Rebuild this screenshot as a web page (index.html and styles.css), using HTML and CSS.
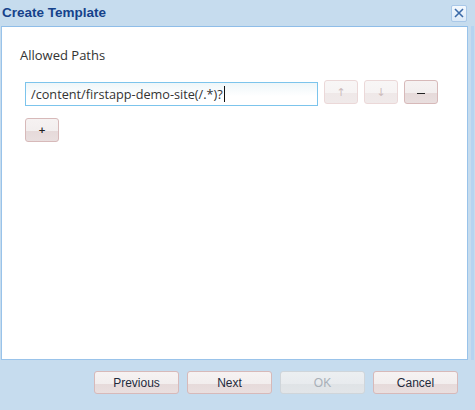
FILE: index.html
```html
<!DOCTYPE html>
<html>
<head>
<meta charset="utf-8">
<link rel="stylesheet" href="styles.css">
</head>
<body>
<div class="window">
  <div class="header">
    <div class="title">Create Template</div>
    <div class="close">
      <svg width="10" height="10" viewBox="0 0 10 10"><path d="M1 1L9 9M9 1L1 9" stroke="#3b6aa8" stroke-width="1.6" fill="none"/></svg>
    </div>
  </div>
  <div class="middle">
    <div class="panel">
      <div class="label">Allowed Paths</div>
      <div class="row">
        <div class="input">/content/firstapp-demo-site(/.*)?<span class="caret"></span></div>
        <div class="btn small disabled"><span class="arrow">&#8593;</span></div>
        <div class="btn small disabled"><span class="arrow">&#8595;</span></div>
        <div class="btn small"><span class="minus"></span></div>
      </div>
      <div class="btn small plus">+</div>
    </div>
    <div class="strip"><div class="stripe"></div></div>
  </div>
  <div class="footer">
    <div class="btn big">Previous</div>
    <div class="btn big">Next</div>
    <div class="btn big disabled">OK</div>
    <div class="btn big">Cancel</div>
  </div>
</div>
</body>
</html>
```
FILE: styles.css
```css
html, body { margin: 0; padding: 0; }
body { width: 475px; height: 410px; overflow: hidden; }
.window {
  width: 475px; height: 410px; background: #c6dcee;
  display: flex; flex-direction: column;
}
.header {
  height: 26px; display: flex; align-items: center; justify-content: space-between;
  padding: 0 8px 0 2px; box-sizing: border-box;
}
.title {
  font-family: "Liberation Sans", Arial, sans-serif; font-weight: bold; font-size: 13.5px;
  color: #15428b; margin-top: -1px;
}
.close {
  width: 14px; height: 15px; border: 1px solid #a9c8e8; border-radius: 2px;
  background: linear-gradient(#f4f9fe, #dbe9f7);
  display: flex; align-items: center; justify-content: center;
}
.middle { flex: 1; display: flex; }
.panel {
  margin-left: 1px; width: 467px; box-sizing: border-box;
  background: #fff; border: 1px solid #99c3ea; border-top-color: #8fbde8;
  padding: 19px 0 0 18px;
}
.label {
  font-family: "Open Sans", sans-serif; font-size: 13px; color: #333;
  height: 18px; line-height: 18px;
}
.row { display: flex; gap: 6px; margin-top: 18px; margin-left: 5px; }
.input {
  width: 293px; height: 24px; box-sizing: border-box;
  border: 1px solid #7cc4ec; background: linear-gradient(#eef6f9, #ffffff 60%);
  font-family: "Open Sans", sans-serif; font-size: 12.7px; color: #333;
  line-height: 22px; padding-left: 5px; white-space: nowrap;
}
.caret { display: inline-block; width: 1px; height: 16px; background: #111; vertical-align: -3px; margin-left: 1px; }
.btn {
  box-sizing: border-box; border: 1px solid #d7b9b9; border-radius: 3px;
  background: linear-gradient(#f6f2f2 0%, #f2eeee 55%, #e6dada 56%, #e9dfdf 100%);
  display: flex; align-items: center; justify-content: center;
  color: #222;
}
.btn.small { width: 34px; height: 24px; margin-top: -2px; }
.btn.small.disabled { border-color: #ebd8d8; background: linear-gradient(#f8f6f6 0%, #f6f3f3 55%, #efe8e8 56%, #f0eaea 100%); }
.arrow { font-family: "DejaVu Sans", sans-serif; font-size: 11px; color: #ccbcbc; }
.minus { width: 8px; height: 1px; background: #222; display: block; margin-top: 2px; }
.btn.small.plus { margin-left: 5px; margin-top: 12px; font-family: "DejaVu Sans", sans-serif; font-size: 9px; font-weight: bold; }
.strip { flex: 1; position: relative; }
.stripe { position: absolute; left: 3px; top: 0; bottom: 0; width: 3px; background: #b5d4f1; }
.footer {
  height: 50px; display: flex; align-items: flex-start; justify-content: flex-end;
  gap: 8px; padding: 11px 17px 0 0; box-sizing: border-box;
}
.btn.big {
  width: 85px; height: 23px;
  font-family: "Liberation Sans", Arial, sans-serif; font-size: 12px; color: #1f2a3c;
}
.btn.big.disabled {
  border-color: #cfd5da; color: #a8b0b8;
  background: linear-gradient(#eceff1 0%, #e8ebee 55%, #dfe3e6 56%, #e2e5e8 100%);
}
```
